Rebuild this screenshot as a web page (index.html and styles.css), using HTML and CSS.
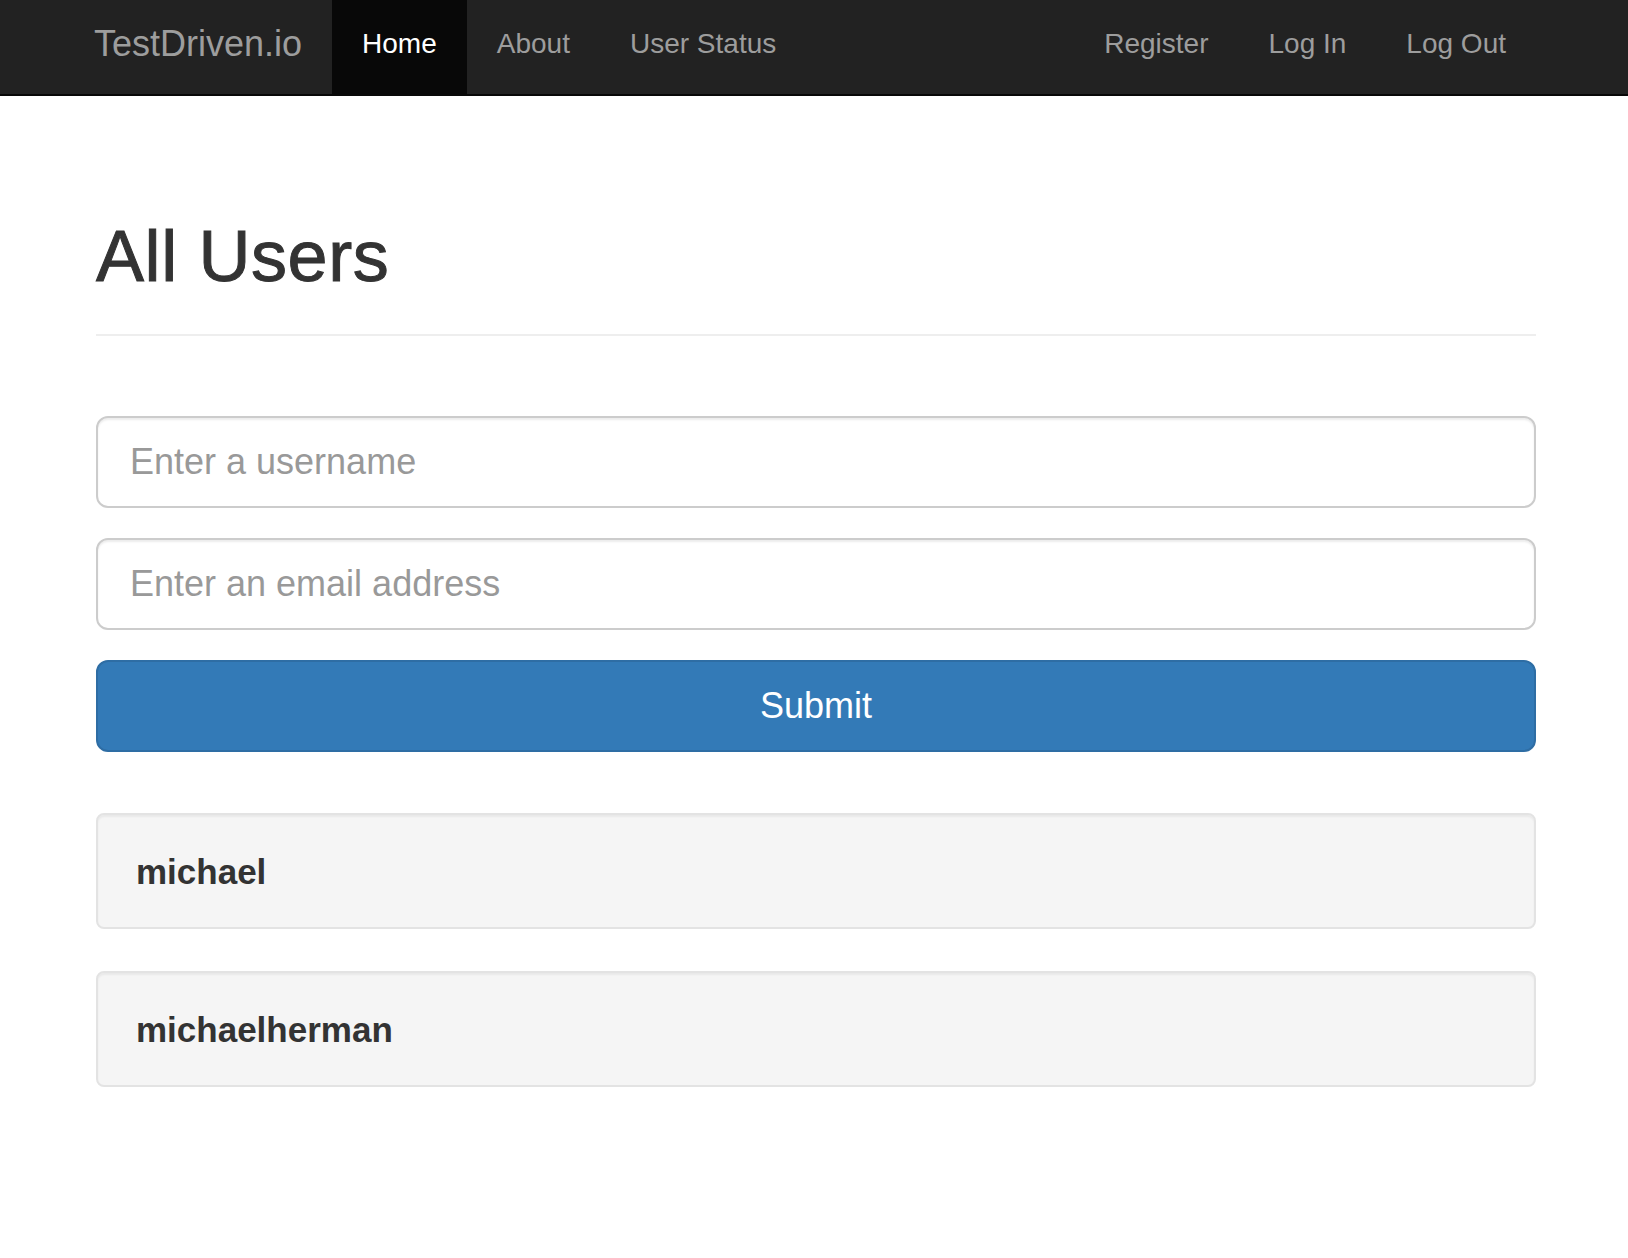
FILE: index.html
```html
<!DOCTYPE html>
<html lang="en">
<head>
<meta charset="utf-8">
<title>TestDriven.io</title>
<link rel="stylesheet" href="styles.css">
</head>
<body>
<nav class="navbar">
  <div class="navbar-inner">
    <a class="brand" href="#">TestDriven.io</a>
    <ul class="nav">
      <li><a class="active" href="#">Home</a></li>
      <li><a href="#">About</a></li>
      <li><a href="#">User Status</a></li>
    </ul>
    <ul class="nav nav-right">
      <li><a href="#">Register</a></li>
      <li><a href="#">Log In</a></li>
      <li><a href="#">Log Out</a></li>
    </ul>
  </div>
</nav>
<main class="container">
  <div class="page-header">
    <h1>All Users</h1>
  </div>
  <form class="user-form">
    <div class="form-group">
      <input class="form-control" type="text" name="username" placeholder="Enter a username">
    </div>
    <div class="form-group">
      <input class="form-control" type="email" name="email" placeholder="Enter an email address">
    </div>
    <button class="btn-submit" type="button">Submit</button>
  </form>
  <div class="user-list">
    <h4 class="well">michael</h4>
    <h4 class="well">michaelherman</h4>
  </div>
</main>
</body>
</html>
```
FILE: styles.css
```css
* {
  box-sizing: border-box;
}

body {
  margin: 0;
  font-family: "Liberation Sans", Arial, Helvetica, sans-serif;
  font-size: 28px;
  line-height: 40px;
  color: #333;
  background: #fff;
}

a {
  text-decoration: none;
}

.navbar {
  background: #222;
  border-bottom: 2px solid #080808;
}

.navbar-inner {
  width: 1442px;
  margin-left: 94px;
  display: flex;
  height: 94px;
}

.brand {
  display: block;
  font-size: 36px;
  line-height: 40px;
  padding: 24px 30px 30px 0;
  color: #9d9d9d;
}

.nav {
  display: flex;
  list-style: none;
  margin: 0;
  padding: 0;
}

.nav-right {
  margin-left: auto;
}

.nav a {
  display: block;
  padding: 24px 30px 30px;
  line-height: 40px;
  font-size: 28px;
  color: #9d9d9d;
}

.nav a.active {
  background: #080808;
  color: #fff;
}

.container {
  width: 1440px;
  margin-left: 96px;
}

.page-header {
  margin-top: 121px;
  padding-bottom: 18px;
  border-bottom: 2px solid #eee;
  margin-bottom: 80px;
}

.page-header h1 {
  margin: 0 0 20px;
  font-size: 72px;
  line-height: 79.2px;
  font-weight: 500;
  letter-spacing: 0.6px;
  color: #333;
  -webkit-text-stroke: 1px #333;
}

.user-form {
  margin: 0;
}

.form-group {
  margin-bottom: 30px;
}

.form-control {
  display: block;
  width: 100%;
  height: 92px;
  padding: 20px 32px;
  font-family: inherit;
  font-size: 36px;
  line-height: 48px;
  color: #555;
  background: #fff;
  border: 2px solid #ccc;
  border-radius: 12px;
  box-shadow: inset 0 2px 2px rgba(0, 0, 0, 0.075);
  outline: none;
}

.form-control::placeholder {
  color: #999;
  opacity: 1;
}

.btn-submit {
  display: block;
  width: 100%;
  height: 92px;
  padding: 20px 32px;
  font-family: inherit;
  font-size: 36px;
  line-height: 48px;
  color: #fff;
  background: #337ab7;
  border: 2px solid #2e6da4;
  border-radius: 12px;
  text-align: center;
}

.user-list {
  margin-top: 61px;
}

.well {
  margin: 0 0 42px;
  padding: 39px 38px 37px;
  font-size: 35px;
  line-height: 36px;
  font-weight: 700;
  color: #333;
  background: #f5f5f5;
  border: 2px solid #e3e3e3;
  border-radius: 8px;
  box-shadow: inset 0 2px 2px rgba(0, 0, 0, 0.05);
}
```
